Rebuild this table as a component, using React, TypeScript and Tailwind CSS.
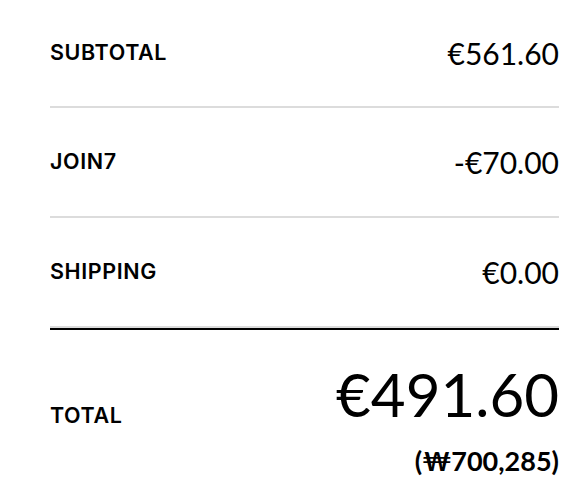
import React from "react";

const rows = [
  { label: "SUBTOTAL", value: "€561.60", h: "h-[108px]" },
  { label: "JOIN7", value: "-€70.00", h: "h-[110px]" },
  { label: "SHIPPING", value: "€0.00", h: "h-[110px]" },
];

export default function App() {
  return (
    <div className="w-[588px] h-[492px] bg-white pl-[50px] pr-[29px] text-black">
      {rows.map((row) => (
        <div
          key={row.label}
          className={`${row.h} flex items-center justify-between border-b-2 border-[#dcdcdc]`}
        >
          <span className="font-['Inter',sans-serif] font-semibold text-[21.5px] leading-[22px] tracking-[0.6px] -mt-[2px]">
            {row.label}
          </span>
          <span className="font-['Lato',sans-serif] text-[30px] leading-[34px]">
            {row.value}
          </span>
        </div>
      ))}
      <div className="border-t-2 border-black flex items-start justify-between pt-[34px]">
        <span className="font-['Inter',sans-serif] font-semibold text-[21.5px] leading-[22px] tracking-[0.6px] mt-[40px]">
          TOTAL
        </span>
        <div className="flex flex-col items-end font-['Lato',sans-serif]">
          <span className="text-[60px] leading-[60px]">€491.60</span>
          <span className="font-bold text-[27px] leading-[32px] mt-[21px]">
            (₩700,285)
          </span>
        </div>
      </div>
    </div>
  );
}
